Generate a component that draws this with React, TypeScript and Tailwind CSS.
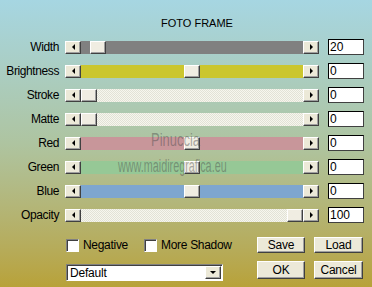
import React from "react";

type Row = { label: string; track: string; thumb: number; value: string };

const PATTERN =
  "bg-[image:repeating-conic-gradient(#f6f6ee_0_25%,#e2e2d6_0_50%)] bg-[length:2px_2px]";

const rows: Row[] = [
  { label: "Width", track: "bg-[#808080]", thumb: 9, value: "20" },
  { label: "Brightness", track: "bg-[#cbc62e]", thumb: 103, value: "0" },
  { label: "Stroke", track: PATTERN, thumb: 0, value: "0" },
  { label: "Matte", track: PATTERN, thumb: 0, value: "0" },
  { label: "Red", track: "bg-[#c8969a]", thumb: 103, value: "0" },
  { label: "Green", track: "bg-[#96c896]", thumb: 103, value: "0" },
  { label: "Blue", track: "bg-[#7ea6cf]", thumb: 103, value: "0" },
  { label: "Opacity", track: PATTERN, thumb: 206, value: "100" },
];

function ArrowBtn({ dir }: { dir: "l" | "r" }) {
  return (
    <div className="w-[16px] h-full shrink-0 bg-[#ece9d8] border border-t-white border-l-white border-r-[#404040] border-b-[#404040] shadow-[inset_-1px_-1px_0_#a0a0a0] flex items-center justify-center">
      {dir === "l" ? (
        <div className="w-0 h-0 border-y-[3px] border-y-transparent border-r-[3px] border-r-black" />
      ) : (
        <div className="w-0 h-0 border-y-[3px] border-y-transparent border-l-[3px] border-l-black" />
      )}
    </div>
  );
}

function Thumb() {
  return (
    <div className="w-[16px] h-full shrink-0 bg-[#f0ede2] border border-t-white border-l-white border-r-[#404040] border-b-[#404040] shadow-[inset_-1px_-1px_0_#a0a0a0]" />
  );
}

function Slider({ row }: { row: Row }) {
  return (
    <div className="flex items-center h-[24px]">
      <div className="w-[59px] text-right text-[12px] tracking-[-0.4px] leading-none">
        {row.label}
      </div>
      <div className="ml-[6px] w-[254px] h-[13px] flex">
        <ArrowBtn dir="l" />
        <div className={"flex-1 h-full flex " + row.track}>
          <div className="h-full shrink-0" style={{ width: row.thumb }} />
          <Thumb />
        </div>
        <ArrowBtn dir="r" />
      </div>
      <div className="ml-[9px] w-[36px] h-[16px] bg-white border border-t-black border-l-black border-r-[#404040] border-b-[#404040] text-[12px] leading-[14px] pl-[1px]">
        {row.value}
      </div>
    </div>
  );
}

function Checkbox({ label }: { label: string }) {
  return (
    <div className="flex items-center shrink-0 whitespace-nowrap">
      <div className="w-[13px] h-[13px] shrink-0 bg-white border border-t-[#808080] border-l-[#808080] border-r-white border-b-white shadow-[inset_1px_1px_0_#404040]" />
      <span className="ml-[4px] text-[12px] tracking-[-0.3px] leading-none">{label}</span>
    </div>
  );
}

function Button({ label, w, h }: { label: string; w: string; h: string }) {
  return (
    <div
      className={
        "bg-[#ece9d8] border border-t-white border-l-white border-r-[#404040] border-b-[#404040] shadow-[inset_-1px_-1px_0_#a0a0a0] flex items-center justify-center text-[12px] tracking-[-0.2px] leading-none " +
        w +
        " " +
        h
      }
    >
      {label}
    </div>
  );
}

export default function App() {
  return (
    <div className="w-[372px] h-[287px] relative overflow-hidden bg-gradient-to-b from-[#a6d6e2] via-[#aec4a0] to-[#b8a238] font-['Liberation_Sans',Arial,sans-serif] text-black">
      <div className="pt-[16px] h-[35px] pl-[22px] text-center text-[11px] leading-[15px]">
        FOTO FRAME
      </div>
      <div className="flex flex-col">
        {rows.map((r) => (
          <Slider key={r.label} row={r} />
        ))}
      </div>
      <div className="flex pl-[66px] pt-[10px]">
        <div className="w-[157px] shrink-0 flex flex-col">
          <div className="h-[16px] flex items-center gap-[16px] whitespace-nowrap">
            <Checkbox label="Negative" />
            <Checkbox label="More Shadow" />
          </div>
          <div className="h-[18px] mt-[8px] pt-[3px]">
            <div className="w-[157px] h-[17px] bg-white border border-t-[#808080] border-l-[#808080] border-r-white border-b-white shadow-[inset_1px_1px_0_#404040] flex items-center">
              <span className="pl-[3px] text-[12px] tracking-[-0.2px] leading-none flex-1">Default</span>
              <div className="w-[16px] h-[13px] mr-[1px] bg-[#ece9d8] border border-t-white border-l-white border-r-[#404040] border-b-[#404040] shadow-[inset_-1px_-1px_0_#a0a0a0] flex items-center justify-center">
                <div className="w-0 h-0 border-x-[3px] border-x-transparent border-t-[3px] border-t-black" />
              </div>
            </div>
          </div>
        </div>
        <div className="ml-[34px] flex flex-col">
          <div className="flex gap-[9px]">
            <Button label="Save" w="w-[48px]" h="h-[16px]" />
            <Button label="Load" w="w-[49px]" h="h-[16px]" />
          </div>
          <div className="flex gap-[9px] mt-[8px]">
            <Button label="OK" w="w-[48px]" h="h-[18px]" />
            <Button label="Cancel" w="w-[49px]" h="h-[18px]" />
          </div>
        </div>
      </div>
      <div className="absolute left-[151px] top-[131px] text-[18px] leading-none text-[#4a4a4a]/45 scale-x-[0.72] origin-left whitespace-nowrap">
        Pinuccia
      </div>
      <div className="absolute left-[118px] top-[157px] text-[18px] leading-none text-[#4a4a4a]/45 scale-x-[0.6] origin-left whitespace-nowrap">
        www.maidiregrafica.eu
      </div>
    </div>
  );
}
